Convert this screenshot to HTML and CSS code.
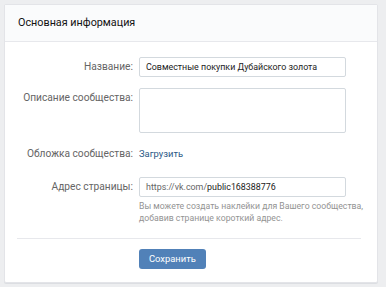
FILE: index.html
```html
<!DOCTYPE html>
<html lang="ru">
<head>
  <meta charset="utf-8" />
  <meta name="viewport" content="width=device-width, initial-scale=1" />
  <title>Основная информация</title>
  <link rel="stylesheet" href="styles.css">
</head>
<body>
  <div class="page">
    <section class="card">
      <header class="card-head">Основная информация</header>
      <form class="form">
        <div class="row">
          <label class="label">Название:</label>
          <div class="field"><input class="input" type="text" value="Совместные покупки Дубайского золота"></div>
        </div>
        <div class="row">
          <label class="label">Описание сообщества:</label>
          <div class="field"><textarea class="input area"></textarea></div>
        </div>
        <div class="row row-text">
          <label class="label">Обложка сообщества:</label>
          <div class="field"><a class="link" href="#">Загрузить</a></div>
        </div>
        <div class="row">
          <label class="label">Адрес страницы:</label>
          <div class="field">
            <div class="input addr"><span class="prefix">https://vk.com/</span>public168388776</div>
            <p class="hint">Вы можете создать наклейки для Вашего сообщества,<br>добавив странице короткий адрес.</p>
          </div>
        </div>
        <div class="sep"></div>
        <div class="row">
          <span></span>
          <div class="field"><button class="btn" type="button">Сохранить</button></div>
        </div>
      </form>
    </section>
  </div>
</body>
</html>
```

FILE: styles.css
```css
body{margin:0;background:#edeef0;font-family:Roboto,"Open Sans",sans-serif;font-size:9.8px;color:#000}
.page{padding:4px 8px 5px 4px}
.card{background:#fff;border:1px solid #e3e4e8;border-radius:2px;box-shadow:0 1px 0 #dcdee2}
.card-head{background:#fafbfc;border-bottom:1px solid #e7e8ec;height:36px;line-height:36px;padding-left:13px;font-size:10.8px;color:#111}
.form{padding:15px 16px 13px 12px}
.row{display:grid;grid-template-columns:116px 207px;column-gap:6px;margin-bottom:11px}
.field{min-width:0}
.label{text-align:right;color:#656565;line-height:20px;white-space:nowrap;font-size:10.2px}
.row-text{margin:10px 0 13px}
.input{box-sizing:border-box;width:207px;height:20px;border:1px solid #d3d9de;border-radius:2px;padding:0 6px;font:inherit;font-size:8.9px;color:#222;line-height:18px;display:block;margin:0}
.area{height:45px;resize:none}
.prefix{color:#656565}
.link{color:#2a5885;text-decoration:none;line-height:20px;font-size:9.4px}
.hint{margin:3px 0 0;color:#939393;font-size:8.7px;line-height:12px;white-space:nowrap}
.sep{border-top:1px solid #e7e8ec;margin:14px 0 10px}
.row:last-child{margin-bottom:0}
.btn{background:#5181b8;color:#fff;border:0;border-radius:3px;font:inherit;font-size:9.4px;height:20px;padding:0 10px;line-height:20px;display:block}
```
